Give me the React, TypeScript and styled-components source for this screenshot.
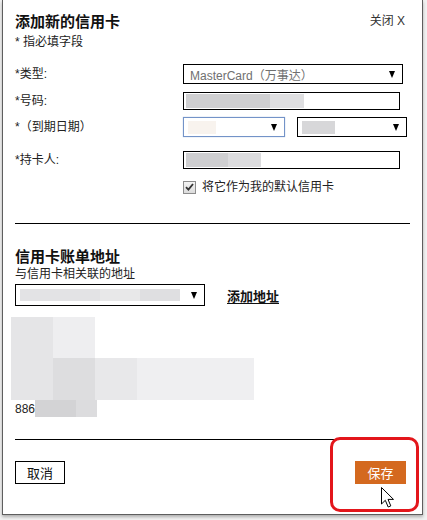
import styled, { createGlobalStyle } from 'styled-components';

const GlobalStyle = createGlobalStyle`
  html, body {
    margin: 0;
    padding: 0;
  }
  body {
    background: #f1f1f1;
    font-family: 'Liberation Sans', 'Noto Sans CJK SC', sans-serif;
    font-size: 12px;
    color: #222;
  }
`;

const Page = styled.div`
  width: 427px;
  height: 520px;
  overflow: hidden;
  padding-left: 2px;
  box-sizing: border-box;
`;

const Modal = styled.div`
  position: relative;
  width: 421px;
  height: 515px;
  box-sizing: border-box;
  background: #fff;
  border: 1px solid #5e5e5e;
  border-top: none;
  padding: 0 12px;
  box-shadow: 0 2px 3px rgba(0, 0, 0, 0.28);
`;

const Header = styled.div`
  display: flex;
  justify-content: space-between;
  align-items: flex-start;
  padding-top: 11px;
`;

const Title = styled.h2<{ $mt?: number }>`
  margin: ${(p) => p.$mt ?? 0}px 0 0;
  font-family: 'Noto Sans CJK SC', sans-serif;
  font-size: 15px;
  font-weight: 700;
  line-height: 20px;
  color: #111;
`;

const Close = styled.span`
  margin-top: 2px;
  margin-right: 5px;
  font-size: 12px;
  line-height: 16px;
  color: #333;
  cursor: pointer;
`;

const Note = styled.div<{ $mt?: number }>`
  margin-top: ${(p) => p.$mt ?? 0}px;
  font-size: 12px;
  line-height: 16px;
  color: #222;
`;

const Form = styled.div`
  margin-top: 14px;
`;

const Row = styled.div<{ $mt: number; $h: number }>`
  display: grid;
  grid-template-columns: 168px 1fr;
  align-items: center;
  margin-top: ${(p) => p.$mt}px;
  height: ${(p) => p.$h}px;
`;

const Label = styled.span`
  font-size: 12px;
  line-height: 16px;
  color: #222;
`;

const Fields = styled.div`
  display: flex;
  align-items: center;
  gap: 12px;
`;

const Select = styled.div<{ $w: number; $h: number; $focus?: boolean }>`
  display: flex;
  align-items: center;
  justify-content: space-between;
  width: ${(p) => p.$w}px;
  height: ${(p) => p.$h}px;
  box-sizing: border-box;
  padding: 0 7px 0 4px;
  border: 1px solid ${(p) => (p.$focus ? '#7393c8' : '#000')};
  box-shadow: ${(p) => (p.$focus ? '0 0 1px #9fb6dd' : 'none')};
  background: #fff;
`;

const SelectText = styled.span`
  padding-left: 2px;
  font-family: 'Liberation Sans', 'Noto Sans CJK SC', sans-serif;
  font-size: 12px;
  color: #707070;
`;

const Arrow = styled.span`
  width: 0;
  height: 0;
  border-left: 3.5px solid transparent;
  border-right: 3.5px solid transparent;
  border-top: 7px solid #000;
`;

const Input = styled.div<{ $w: number; $h: number }>`
  display: flex;
  align-items: center;
  width: ${(p) => p.$w}px;
  height: ${(p) => p.$h}px;
  box-sizing: border-box;
  padding: 0 2px;
  border: 1px solid #000;
  background: #fff;
`;

const Smudge = styled.span<{ $w: number; $h: number; $c: string }>`
  display: block;
  flex: none;
  width: ${(p) => p.$w}px;
  height: ${(p) => p.$h}px;
  background: ${(p) => p.$c};
`;

const SmudgeRow = styled.div`
  display: flex;
  align-items: center;
`;

const CheckRow = styled.label`
  display: flex;
  align-items: center;
  gap: 6px;
  font-size: 12px;
  line-height: 16px;
  color: #222;
`;

const CheckBox = styled.span`
  display: flex;
  align-items: center;
  justify-content: center;
  width: 13px;
  height: 13px;
  box-sizing: border-box;
  border: 1px solid #8d8d8d;
  background: linear-gradient(#f4f4f4, #dcdcdc);
`;

const Divider = styled.div<{ $mt: number }>`
  height: 1px;
  margin-top: ${(p) => p.$mt}px;
  background: #000;
`;

const AddressRow = styled.div`
  display: flex;
  align-items: center;
  gap: 22px;
  margin-top: 2px;
`;

const AddLink = styled.a`
  font-family: 'Noto Sans CJK SC', sans-serif;
  font-size: 13px;
  font-weight: 700;
  color: #111;
  text-decoration: underline;
  text-underline-offset: 2px;
`;

const AddressBlock = styled.div`
  margin: 11px 0 0 -4px;
`;

const PhoneRow = styled.div`
  display: flex;
  align-items: center;
  height: 17px;
  font-size: 12px;
  color: #222;
`;

const Footer = styled.div`
  display: flex;
  justify-content: space-between;
  align-items: center;
  margin-top: 21px;
  padding-right: 4px;
`;

const Button = styled.button<{ $primary?: boolean }>`
  height: 23px;
  width: ${(p) => (p.$primary ? 51 : 50)}px;
  padding: 0;
  border: ${(p) => (p.$primary ? 'none' : '1px solid #000')};
  background: ${(p) => (p.$primary ? '#d4691f' : '#fff')};
  color: ${(p) => (p.$primary ? '#fff' : '#111')};
  font-family: 'Noto Sans CJK SC', sans-serif;
  font-size: 13px;
  cursor: pointer;
`;

const Highlight = styled.div`
  position: absolute;
  left: 327px;
  top: 437px;
  width: 89px;
  height: 75px;
  box-sizing: border-box;
  border: 3px solid #e3161b;
  border-radius: 10px;
  pointer-events: none;
`;

const Pointer = styled.svg`
  position: absolute;
  left: 377px;
  top: 486px;
`;

function App() {
  return (
    <Page>
      <GlobalStyle />
      <Modal>
        <Header>
          <Title>添加新的信用卡</Title>
          <Close>关闭 X</Close>
        </Header>
        <Note $mt={3}>* 指必填字段</Note>

        <Form>
          <Row $mt={0} $h={20}>
            <Label>*类型:</Label>
            <Select $w={220} $h={20}>
              <SelectText>MasterCard（万事达）</SelectText>
              <Arrow />
            </Select>
          </Row>
          <Row $mt={8} $h={18}>
            <Label>*号码:</Label>
            <Input $w={217} $h={18}>
              <Smudge $w={84} $h={14} $c="#cfcfd1" />
              <Smudge $w={34} $h={14} $c="#dfdfe1" />
            </Input>
          </Row>
          <Row $mt={7} $h={20}>
            <Label>*（到期日期）</Label>
            <Fields>
              <Select $w={102} $h={20} $focus>
                <Smudge $w={28} $h={13} $c="#f8f3ee" />
                <Arrow />
              </Select>
              <Select $w={110} $h={20}>
                <Smudge $w={33} $h={13} $c="#d7d7d9" />
                <Arrow />
              </Select>
            </Fields>
          </Row>
          <Row $mt={14} $h={18}>
            <Label>*持卡人:</Label>
            <Input $w={217} $h={18}>
              <Smudge $w={42} $h={14} $c="#cfcfd1" />
              <Smudge $w={33} $h={14} $c="#dcdcde" />
            </Input>
          </Row>
          <Row $mt={10} $h={16}>
            <span />
            <CheckRow>
              <CheckBox>
                <svg width="9" height="8" viewBox="0 0 9 8">
                  <path d="M1 4.2 L3.4 6.6 L8 1" fill="none" stroke="#333" strokeWidth="1.8" />
                </svg>
              </CheckBox>
              将它作为我的默认信用卡
            </CheckRow>
          </Row>
        </Form>

        <Divider $mt={28} />

        <Title $mt={22}>信用卡账单地址</Title>
        <Note>与信用卡相关联的地址</Note>
        <AddressRow>
          <Select $w={190} $h={22}>
            <SmudgeRow>
              <Smudge $w={80} $h={12} $c="#e3e3e5" />
              <Smudge $w={40} $h={12} $c="#e8e8e9" />
              <Smudge $w={40} $h={12} $c="#dfdfe1" />
            </SmudgeRow>
            <Arrow />
          </Select>
          <AddLink>添加地址</AddLink>
        </AddressRow>

        <AddressBlock>
          <SmudgeRow>
            <Smudge $w={42} $h={41} $c="#e5e5e7" />
            <Smudge $w={42} $h={41} $c="#eeeef0" />
          </SmudgeRow>
          <SmudgeRow>
            <Smudge $w={42} $h={42} $c="#e5e5e7" />
            <Smudge $w={42} $h={42} $c="#dddddf" />
            <Smudge $w={42} $h={42} $c="#e8e8ea" />
            <Smudge $w={117} $h={42} $c="#efeff1" />
          </SmudgeRow>
        </AddressBlock>
        <PhoneRow>
          886
          <Smudge $w={41} $h={17} $c="#d3d3d5" />
          <Smudge $w={21} $h={17} $c="#dcdcde" />
        </PhoneRow>

        <Divider $mt={22} />

        <Footer>
          <Button>取消</Button>
          <Button $primary>保存</Button>
        </Footer>

        <Highlight />
        <Pointer width="16" height="23" viewBox="0 0 16 23">
          <path
            d="M1.5 1.5 L1.5 18 L5.3 14.3 L8.2 21 L10.8 19.9 L8 13.4 L13.5 13.4 Z"
            fill="#fff"
            stroke="#000"
            strokeWidth="1"
            strokeLinejoin="round"
          />
        </Pointer>
      </Modal>
    </Page>
  );
}

export default App;
